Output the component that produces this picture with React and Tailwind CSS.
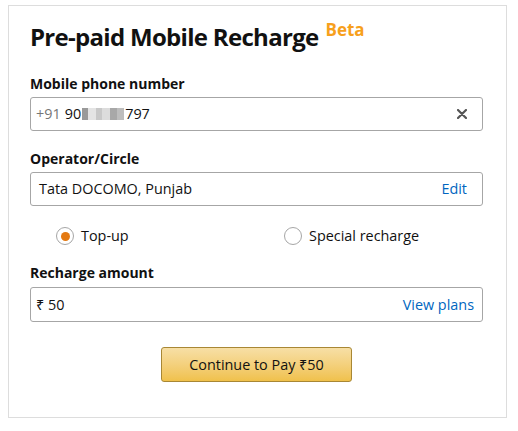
import React, { useState } from 'react';

const font = { fontFamily: '"Open Sans", "Noto Sans", Arial, sans-serif' };

const Radio = ({ checked, label, onClick }) => (
  <button onClick={onClick} className="flex items-center gap-[7px] text-[14.4px] text-[#111] leading-[20px]">
    <span className="w-[18px] h-[18px] rounded-full border border-[#a6a6a6] bg-white flex items-center justify-center">
      {checked && <span className="w-[9px] h-[9px] rounded-full bg-[#e47911]" />}
    </span>
    {label}
  </button>
);

export default function App() {
  const [type, setType] = useState('topup');

  return (
    <div className="bg-white w-[518px] h-[431px] pt-[5px] pl-[8px]" style={font}>
      <div className="w-[499px] h-[413px] border border-[#dddddd] pl-[21px] pr-[23px] pt-[14px]">
        <div className="flex items-start">
          <h1 className="text-[24px] font-bold text-[#111] leading-[34px] tracking-[-0.7px]">Pre-paid Mobile Recharge</h1>
          <span className="ml-[7px] -mt-[1px] text-[17px] font-bold text-[#f7a01c] leading-[22px]">Beta</span>
        </div>

        <div className="mt-[21px] text-[14px] font-bold text-[#111] leading-[18px]">Mobile phone number</div>
        <div className="mt-[4px] h-[34px] border border-[#a6a6a6] rounded-[3px] flex items-center pl-[5px] pr-[15px]">
          <span className="text-[14.4px] text-[#767676]">+91</span>
          <span className="ml-[4px] text-[14.4px] text-[#111] flex items-center">
            90
            <span className="inline-flex h-[12px] w-[42px] mx-[1px]">
              <span className="w-[6px] bg-[#9a9a9a]" />
              <span className="w-[8px] bg-[#e4e4e4]" />
              <span className="w-[6px] bg-[#c8c8c8]" />
              <span className="w-[8px] bg-[#dcdcdc]" />
              <span className="w-[7px] bg-[#a8a8a8]" />
              <span className="w-[7px] bg-[#bdbdbd]" />
            </span>
            797
          </span>
          <svg className="ml-auto" width="10" height="10" viewBox="0 0 10 10">
            <path d="M1 1L9 9M9 1L1 9" stroke="#555" strokeWidth="2.2" strokeLinecap="round" />
          </svg>
        </div>

        <div className="mt-[19px] text-[14px] font-bold text-[#111] leading-[18px]">Operator/Circle</div>
        <div className="mt-[4px] h-[34px] border border-[#a6a6a6] rounded-[3px] flex items-center pl-[8px] pr-[15px]">
          <span className="text-[14.4px] text-[#111]">Tata DOCOMO, Punjab</span>
          <a className="ml-auto text-[14.4px] text-[#0066c0]">Edit</a>
        </div>

        <div className="mt-[20px] flex items-center">
          <div className="ml-[26px] w-[228px]">
            <Radio checked={type === 'topup'} label="Top-up" onClick={() => setType('topup')} />
          </div>
          <Radio checked={type === 'special'} label="Special recharge" onClick={() => setType('special')} />
        </div>

        <div className="mt-[18px] text-[14px] font-bold text-[#111] leading-[18px]">Recharge amount</div>
        <div className="mt-[5px] h-[35px] border border-[#a6a6a6] rounded-[3px] flex items-center pl-[5px] pr-[8px]">
          <span className="text-[14.4px] text-[#111]">₹ 50</span>
          <a className="ml-auto text-[14.4px] text-[#0066c0]">View plans</a>
        </div>

        <div className="mt-[25px] flex justify-center">
          <button className="w-[191px] h-[35px] rounded-[3px] border border-[#a88734] bg-gradient-to-b from-[#f7dfa5] to-[#f0c14b] text-[14.4px] text-[#111]">
            Continue to Pay ₹50
          </button>
        </div>
      </div>
    </div>
  );
}
